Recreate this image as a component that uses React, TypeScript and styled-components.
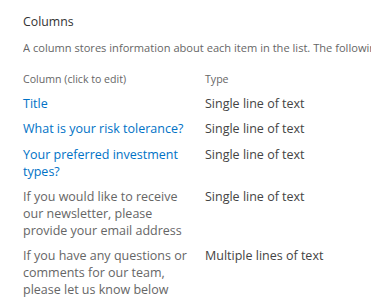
import { Fragment } from "react";
import styled, { createGlobalStyle } from "styled-components";

const GlobalStyle = createGlobalStyle`
  html, body {
    margin: 0;
    padding: 0;
    background: #ffffff;
    overflow: hidden;
  }
  body {
    font-family: "Open Sans", "Liberation Sans", sans-serif;
  }
`;

const Page = styled.div`
  padding: 12px 0 0 23px;
  width: 371px;
  box-sizing: border-box;
`;

const Heading = styled.h2`
  margin: 0;
  font-size: 12.3px;
  font-weight: 400;
  line-height: 20px;
  color: #333333;
`;

const Description = styled.p`
  margin: 6px 0 0;
  font-size: 11.1px;
  line-height: 20px;
  color: #666666;
  white-space: nowrap;
  overflow: hidden;
`;

const Table = styled.div`
  display: grid;
  grid-template-columns: 182px auto;
  margin-top: 13px;
`;

const HeaderCell = styled.div`
  font-size: 10.6px;
  line-height: 16px;
  color: #666666;
  padding-bottom: 4px;
`;

const NameCell = styled.div<{ $link?: boolean }>`
  font-size: 12.5px;
  line-height: 17px;
  padding: 4px 12px 4.25px 0;
  color: ${({ $link }) => ($link ? "#0072c6" : "#666666")};
`;

const TypeCell = styled.div`
  font-size: 12.5px;
  line-height: 17px;
  padding: 4px 0 4.25px;
  color: #444444;
`;

interface ColumnRow {
  name: string;
  type: string;
  link?: boolean;
}

const rows: ColumnRow[] = [
  { name: "Title", type: "Single line of text", link: true },
  { name: "What is your risk tolerance?", type: "Single line of text", link: true },
  { name: "Your preferred investment types?", type: "Single line of text", link: true },
  {
    name: "If you would like to receive our newsletter, please provide your email address",
    type: "Single line of text",
  },
  {
    name: "If you have any questions or comments for our team, please let us know below",
    type: "Multiple lines of text",
  },
];

export default function App() {
  return (
    <>
      <GlobalStyle />
      <Page>
        <Heading>Columns</Heading>
        <Description>
          A column stores information about each item in the list. The following columns are currently in this list:
        </Description>
        <Table>
          <HeaderCell>Column (click to edit)</HeaderCell>
          <HeaderCell>Type</HeaderCell>
          {rows.map((row) => (
            <Fragment key={row.name}>
              <NameCell $link={row.link}>{row.name}</NameCell>
              <TypeCell>{row.type}</TypeCell>
            </Fragment>
          ))}
        </Table>
      </Page>
    </>
  );
}
